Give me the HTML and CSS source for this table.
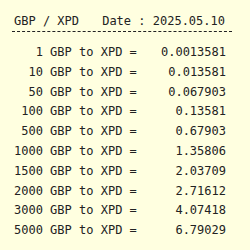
FILE: index.html
```html
<!DOCTYPE html>
<html>
<head>
<meta charset="utf-8">
<link rel="stylesheet" href="styles.css">
</head>
<body>
<div class="card">
  <div class="head">
    <span>GBP / XPD</span>
    <span>Date : 2025.05.10</span>
  </div>
  <div class="rows">
    <div class="row"><span class="amt">1</span><span class="pair">GBP to XPD =</span><span class="val">0.0013581</span></div>
    <div class="row"><span class="amt">10</span><span class="pair">GBP to XPD =</span><span class="val">0.013581</span></div>
    <div class="row"><span class="amt">50</span><span class="pair">GBP to XPD =</span><span class="val">0.067903</span></div>
    <div class="row"><span class="amt">100</span><span class="pair">GBP to XPD =</span><span class="val">0.13581</span></div>
    <div class="row"><span class="amt">500</span><span class="pair">GBP to XPD =</span><span class="val">0.67903</span></div>
    <div class="row"><span class="amt">1000</span><span class="pair">GBP to XPD =</span><span class="val">1.35806</span></div>
    <div class="row"><span class="amt">1500</span><span class="pair">GBP to XPD =</span><span class="val">2.03709</span></div>
    <div class="row"><span class="amt">2000</span><span class="pair">GBP to XPD =</span><span class="val">2.71612</span></div>
    <div class="row"><span class="amt">3000</span><span class="pair">GBP to XPD =</span><span class="val">4.07418</span></div>
    <div class="row"><span class="amt">5000</span><span class="pair">GBP to XPD =</span><span class="val">6.79029</span></div>
  </div>
</div>
</body>
</html>
```
FILE: styles.css
```css
html, body {
  margin: 0;
  padding: 0;
  background: #ffffe0;
}
body {
  font-family: "DejaVu Sans Mono", monospace;
  font-size: 12px;
  color: #222;
}
.card {
  width: 220px;
  margin-left: 12px;
  padding-top: 14px;
}
.head {
  display: flex;
  justify-content: space-between;
  line-height: 14px;
  padding: 0 7px 3px 2px;
  border-bottom: 1px dashed #222;
  white-space: pre;
}
.rows {
  margin-top: 11px;
  padding: 0 6px 0 2px;
}
.row {
  display: flex;
  line-height: 19.8px;
  white-space: pre;
}
.amt {
  width: 4ch;
  text-align: right;
}
.pair {
  margin-left: 1ch;
}
.val {
  flex: 1;
  text-align: right;
}
```
